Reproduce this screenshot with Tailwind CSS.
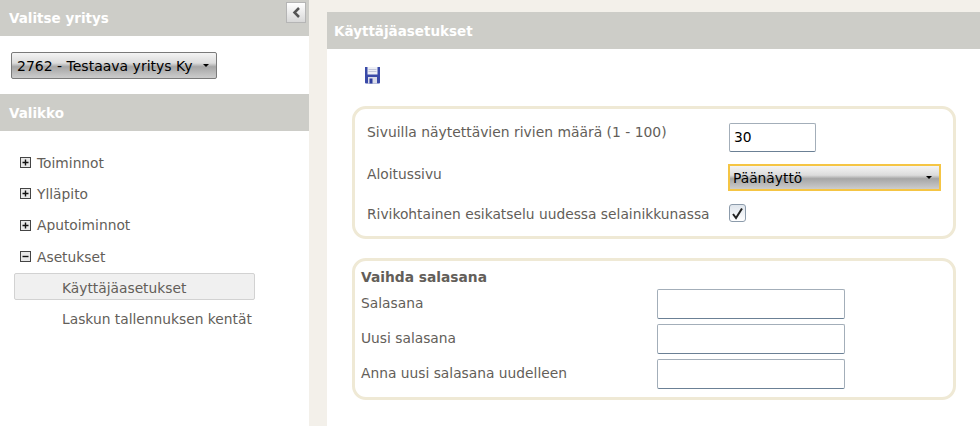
<!DOCTYPE html>
<html lang="fi">
<head>
    <meta charset="UTF-8">
    <title>Käyttäjäasetukset</title>
    <script src="https://cdn.jsdelivr.net/npm/@tailwindcss/browser@4"></script>
</head>
<body class="bg-white overflow-hidden">
<div class="flex w-[980px] h-[426px] overflow-hidden font-['DejaVu_Sans',sans-serif] text-[13.8px] leading-[16px] text-[#635e59]">
    <!-- left panel -->
    <aside class="w-[309px] shrink-0 relative">
        <div class="h-[36px] bg-[#cdcdc8] pl-[9px] flex items-center text-white font-bold text-[13.5px]">Valitse yritys</div>
        <div class="h-[58px] pl-[11px] pt-[16px]">
            <div class="w-[206px] h-[27px] border border-[#7a7a7a] rounded-[2px] bg-[linear-gradient(#f4f4f4,#dcdcdc_40%,#a6a6a6_55%,#cccccc)] flex items-center justify-between pl-[5px] pr-[7px] text-black text-[14px]">
                <span>2762 - Testaava yritys Ky</span>
                <span class="w-0 h-0 border-x-[3px] border-x-transparent border-t-[3px] border-t-black"></span>
            </div>
        </div>
        <div class="h-[37px] bg-[#cdcdc8] pl-[9px] flex items-center text-white font-bold text-[13.5px]">Valikko</div>

        <button class="absolute top-[2px] left-[286px] w-[20px] h-[21px] border border-[#b5b5b5] bg-[linear-gradient(#ffffff,#d8d8d8)] flex items-center justify-center">
            <svg width="9" height="11" viewBox="0 0 9 11"><path d="M7 1 L2.500 5.500 L7 10" fill="none" stroke="#555" stroke-width="2.500"/></svg>
        </button>

        <ul class="pt-[16px] pl-[20px]">
            <li class="h-[31px] flex items-center gap-[6px]">
                <svg width="11" height="11" viewBox="0 0 11 11"><rect x=".5" y=".5" width="10" height="10" fill="#e8e8e8" stroke="#444"/><path d="M2.5 5.5h6M5.5 2.5v6" stroke="#111" stroke-width="1.4"/></svg>
                <span>Toiminnot</span>
            </li>
            <li class="h-[31px] flex items-center gap-[6px]">
                <svg width="11" height="11" viewBox="0 0 11 11"><rect x=".5" y=".5" width="10" height="10" fill="#e8e8e8" stroke="#444"/><path d="M2.5 5.5h6M5.5 2.5v6" stroke="#111" stroke-width="1.4"/></svg>
                <span>Ylläpito</span>
            </li>
            <li class="h-[32px] flex items-center gap-[6px]">
                <svg width="11" height="11" viewBox="0 0 11 11"><rect x=".5" y=".5" width="10" height="10" fill="#e8e8e8" stroke="#444"/><path d="M2.5 5.5h6M5.5 2.5v6" stroke="#111" stroke-width="1.4"/></svg>
                <span>Aputoiminnot</span>
            </li>
            <li class="h-[31px] flex items-center gap-[6px]">
                <svg width="11" height="11" viewBox="0 0 11 11"><rect x=".5" y=".5" width="10" height="10" fill="#e8e8e8" stroke="#444"/><path d="M2.5 5.5h6" stroke="#111" stroke-width="1.4"/></svg>
                <span>Asetukset</span>
            </li>
        </ul>
        <div class="ml-[14px] mt-[1px] w-[241px] h-[27px] border border-[#d2d2d2] rounded-[2px] bg-[#f0f0f0] flex items-center pl-[47px] pt-[2px]">Käyttäjäasetukset</div>
        <div class="ml-[14px] h-[31px] w-[241px] flex items-center pl-[48px] mt-[3px]">Laskun tallennuksen kentät</div>
    </aside>

    <!-- splitter -->
    <div class="w-[18px] shrink-0 bg-[#f3f0ea]"></div>

    <!-- right panel -->
    <main class="flex-1 flex flex-col">
        <div class="h-[12px] bg-[#f3f0ea]"></div>
        <div class="h-[37px] bg-[#cdcdc8] pl-[7px] flex items-center text-white font-bold text-[13.5px]">Käyttäjäasetukset</div>
        <div class="pl-[26px] pr-[24px]">
            <div class="pl-[11px] pt-[17px] h-[57px]">
                <svg width="17" height="18" viewBox="0 0 17 18">
                    <path d="M1 1h15v15.500a1 1 0 0 1-1 1H2a1 1 0 0 1-1-1z" fill="#3a4aa8"/>
                    <rect x="3.500" y="1" width="10" height="7.500" fill="#eef0f6"/>
                    <path d="M4.500 3.500h8M4.500 5.500h8" stroke="#c3c6da"/>
                    <rect x="4" y="11" width="9" height="6.500" fill="#d9dbe8"/>
                    <rect x="5.500" y="12.500" width="3" height="5" fill="#2d3c9c"/>
                </svg>
            </div>

            <section class="h-[133px] -ml-[1px] border-[3px] border-[#efe9d5] rounded-[14px] pl-[12px]">
                <div class="flex items-center h-[32px] mt-[12px]">
                    <span class="w-[362px] -mt-[10px] text-[13.9px]">Sivuilla näytettävien rivien määrä (1 - 100)</span>
                    <div class="w-[87px] h-[29px] border border-[#a3aeb9] border-b-[#6b8095] rounded-[2px] pl-[4px] flex items-center text-black">30</div>
                </div>
                <div class="flex items-center h-[27px] mt-[11px]">
                    <span class="w-[361px] -mt-[8px]">Aloitussivu</span>
                    <div class="w-[213px] h-[27px] border-2 border-[#f5c544] bg-[linear-gradient(#f4f4f4,#dcdcdc_40%,#a6a6a6_55%,#cccccc)] flex items-center justify-between pl-[3px] pr-[7px] text-black">
                        <span>Päänäyttö</span>
                        <span class="w-0 h-0 border-x-[3px] border-x-transparent border-t-[3px] border-t-black"></span>
                    </div>
                </div>
                <div class="flex items-center h-[18px] mt-[13px]">
                    <span class="w-[362px] mt-[1px]">Rivikohtainen esikatselu uudessa selainikkunassa</span>
                    <div class="w-[17px] h-[18px] border border-[#8c9bab] rounded-[3px] bg-[linear-gradient(#dfe5ec,#ffffff)] flex items-center justify-center">
                        <svg width="13" height="13" viewBox="0 0 13 13"><path d="M2 7 L5 11 L11 1.500" fill="none" stroke="#222" stroke-width="2"/></svg>
                    </div>
                </div>
            </section>

            <section class="mt-[19px] h-[142px] -ml-[1px] border-[3px] border-[#efe9d5] rounded-[14px] pl-[6px] pt-[8px]">
                <div class="font-bold h-[16px]">Vaihda salasana</div>
                <div class="flex items-start h-[35px] mt-[4px]">
                    <span class="w-[296px] pt-[6px]">Salasana</span>
                    <div class="w-[188px] h-[30px] border border-[#a3aeb9] border-b-[#6b8095] rounded-[2px]"></div>
                </div>
                <div class="flex items-start h-[35px]">
                    <span class="w-[296px] pt-[6px]">Uusi salasana</span>
                    <div class="w-[188px] h-[30px] border border-[#a3aeb9] border-b-[#6b8095] rounded-[2px]"></div>
                </div>
                <div class="flex items-start h-[30px]">
                    <span class="w-[296px] pt-[6px]">Anna uusi salasana uudelleen</span>
                    <div class="w-[188px] h-[30px] border border-[#a3aeb9] border-b-[#6b8095] rounded-[2px]"></div>
                </div>
            </section>
        </div>
    </main>
</div>
</body>
</html>
